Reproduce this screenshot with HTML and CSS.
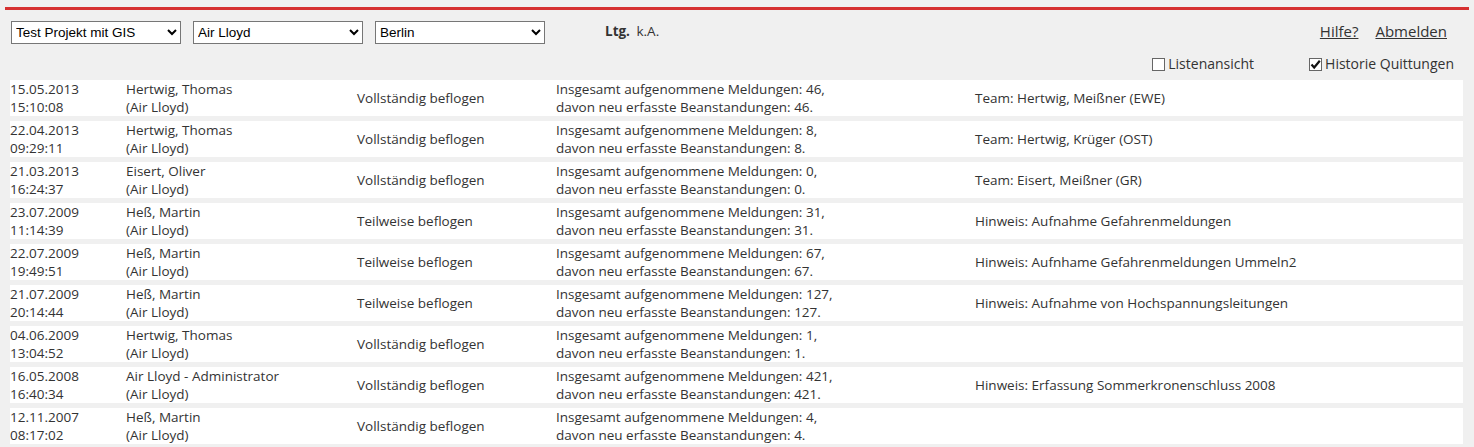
FILE: index.html
```html
<!DOCTYPE html>
<html lang="de">
<head>
  <meta charset="UTF-8" />
  <title>Historie Quittungen</title>
  <link rel="stylesheet" href="styles.css">
</head>
<body>

<div class="topline"></div>

<div class="toolbar">
  <select class="sel">
    <option>Test Projekt mit GIS</option>
  </select>
  <select class="sel">
    <option>Air Lloyd</option>
  </select>
  <select class="sel">
    <option>Berlin</option>
  </select>
  <div class="ltg"><b>Ltg.</b> k.A.</div>
  <div class="links">
    <a href="#">Hilfe?</a>
    <a href="#">Abmelden</a>
  </div>
</div>

<div class="options">
  <label class="opt"><span class="box"></span>Listenansicht</label>
  <label class="opt"><span class="box">
    <svg width="11" height="11" viewBox="0 0 11 11"><path d="M1.5 5.5 L4.2 8.5 L9.8 1.8" fill="none" stroke="#111" stroke-width="2.2"/></svg>
  </span>Historie Quittungen</label>
</div>

<div class="list">
  <div class="row">
    <div>15.05.2013<br>15:10:08</div>
    <div>Hertwig, Thomas<br>(Air Lloyd)</div>
    <div class="mid">Vollständig beflogen</div>
    <div>Insgesamt aufgenommene Meldungen: 46,<br>davon neu erfasste Beanstandungen: 46.</div>
    <div class="mid">Team: Hertwig, Meißner (EWE)</div>
  </div>
  <div class="row">
    <div>22.04.2013<br>09:29:11</div>
    <div>Hertwig, Thomas<br>(Air Lloyd)</div>
    <div class="mid">Vollständig beflogen</div>
    <div>Insgesamt aufgenommene Meldungen: 8,<br>davon neu erfasste Beanstandungen: 8.</div>
    <div class="mid">Team: Hertwig, Krüger (OST)</div>
  </div>
  <div class="row">
    <div>21.03.2013<br>16:24:37</div>
    <div>Eisert, Oliver<br>(Air Lloyd)</div>
    <div class="mid">Vollständig beflogen</div>
    <div>Insgesamt aufgenommene Meldungen: 0,<br>davon neu erfasste Beanstandungen: 0.</div>
    <div class="mid">Team: Eisert, Meißner (GR)</div>
  </div>
  <div class="row">
    <div>23.07.2009<br>11:14:39</div>
    <div>Heß, Martin<br>(Air Lloyd)</div>
    <div class="mid">Teilweise beflogen</div>
    <div>Insgesamt aufgenommene Meldungen: 31,<br>davon neu erfasste Beanstandungen: 31.</div>
    <div class="mid">Hinweis: Aufnahme Gefahrenmeldungen</div>
  </div>
  <div class="row">
    <div>22.07.2009<br>19:49:51</div>
    <div>Heß, Martin<br>(Air Lloyd)</div>
    <div class="mid">Teilweise beflogen</div>
    <div>Insgesamt aufgenommene Meldungen: 67,<br>davon neu erfasste Beanstandungen: 67.</div>
    <div class="mid">Hinweis: Aufnhame Gefahrenmeldungen Ummeln2</div>
  </div>
  <div class="row">
    <div>21.07.2009<br>20:14:44</div>
    <div>Heß, Martin<br>(Air Lloyd)</div>
    <div class="mid">Teilweise beflogen</div>
    <div>Insgesamt aufgenommene Meldungen: 127,<br>davon neu erfasste Beanstandungen: 127.</div>
    <div class="mid">Hinweis: Aufnahme von Hochspannungsleitungen</div>
  </div>
  <div class="row">
    <div>04.06.2009<br>13:04:52</div>
    <div>Hertwig, Thomas<br>(Air Lloyd)</div>
    <div class="mid">Vollständig beflogen</div>
    <div>Insgesamt aufgenommene Meldungen: 1,<br>davon neu erfasste Beanstandungen: 1.</div>
    <div class="mid"></div>
  </div>
  <div class="row">
    <div>16.05.2008<br>16:40:34</div>
    <div>Air Lloyd - Administrator<br>(Air Lloyd)</div>
    <div class="mid">Vollständig beflogen</div>
    <div>Insgesamt aufgenommene Meldungen: 421,<br>davon neu erfasste Beanstandungen: 421.</div>
    <div class="mid">Hinweis: Erfassung Sommerkronenschluss 2008</div>
  </div>
  <div class="row">
    <div>12.11.2007<br>08:17:02</div>
    <div>Heß, Martin<br>(Air Lloyd)</div>
    <div class="mid">Vollständig beflogen</div>
    <div>Insgesamt aufgenommene Meldungen: 4,<br>davon neu erfasste Beanstandungen: 4.</div>
    <div class="mid"></div>
  </div>
</div>

</body>
</html>
```

FILE: styles.css
```css
* {
  box-sizing: border-box;
}

body {
  margin: 0;
  background: #f0f0f0;
  color: #333;
  font-family: "Open Sans", "Liberation Sans", sans-serif;
  font-size: 13.5px;
  height: 447px;
  overflow: hidden;
}

.topline {
  margin: 7px 5px 0 5px;
  height: 3px;
  background: #d63131;
}

.toolbar {
  display: flex;
  align-items: flex-start;
  padding: 11px 0 0 11px;
  height: 34px;
}

.sel {
  width: 170px;
  height: 23px;
  margin: 0 12px 0 0;
  padding: 0;
  font-family: "Liberation Sans", Arial, sans-serif;
  font-size: 13.5px;
  color: #000;
  background: #fff;
  border: 1px solid #767676;
  border-radius: 0;
}

.ltg {
  margin-left: 48px;
  margin-top: 1px;
}

.ltg b {
  margin-right: 3px;
}

.links {
  margin-left: auto;
  margin-right: 27px;
  display: flex;
  gap: 17px;
  font-size: 15px;
}

.links a {
  color: #333;
}

.options {
  display: flex;
  justify-content: flex-end;
  align-items: flex-start;
  gap: 55px;
  height: 36px;
  padding: 13px 9px 0 0;
  margin-right: 11px;
}

.opt {
  display: flex;
  align-items: center;
  gap: 3px;
  font-size: 14px;
  line-height: 14px;
}

.box {
  display: flex;
  align-items: center;
  justify-content: center;
  width: 13px;
  height: 13px;
  background: #fff;
  border: 1px solid #666;
}

.list {
  margin: 0 11px 0 10px;
}

.row {
  display: grid;
  grid-template-columns: 116px 231px 199px 419px 1fr;
  background: #fff;
  height: 36px;
  line-height: 18px;
  margin-bottom: 5px;
}

.row .mid {
  align-self: center;
}
```
